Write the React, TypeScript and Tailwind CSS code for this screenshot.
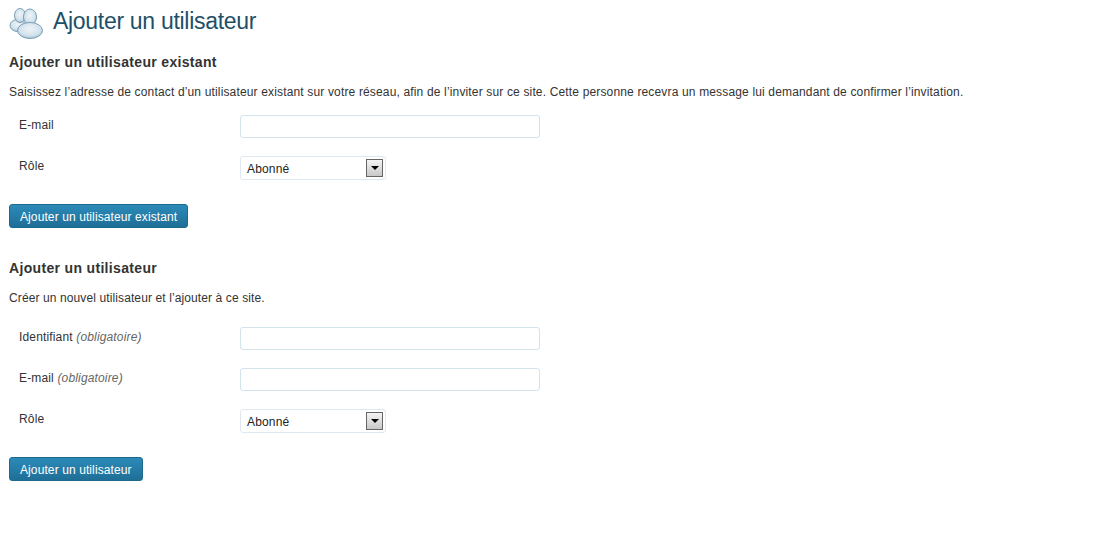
function UsersIcon() {
  return (
    <svg width="36" height="36" viewBox="0 0 36 36" className="shrink-0">
      <defs>
        <radialGradient id="usr" cx="0.5" cy="0.4" r="0.6">
          <stop offset="0" stopColor="#eef4f8" />
          <stop offset="0.7" stopColor="#d3e2ec" />
          <stop offset="1" stopColor="#a4c2d6" />
        </radialGradient>
      </defs>
      <ellipse cx="8.500" cy="21.500" rx="7.500" ry="6" fill="url(#usr)" stroke="#7ba0b8" />
      <ellipse cx="11" cy="11.500" rx="5.500" ry="7" fill="url(#usr)" stroke="#7ba0b8" />
      <ellipse cx="21" cy="13" rx="6.500" ry="8" fill="url(#usr)" stroke="#7ba0b8" />
      <ellipse cx="21" cy="26.500" rx="12.500" ry="8" fill="url(#usr)" stroke="#7ba0b8" />
    </svg>
  );
}

function SelectBox() {
  return (
    <div className="flex h-6 w-[146px] items-center justify-between rounded-[3px] border border-[#dfe8ef] bg-white pl-[6px] pr-[2px] text-xs text-[#222]">
      <span className="pt-[2px]">Abonné</span>
      <span className="flex h-[18px] w-[17px] items-center justify-center border border-[#666] bg-gradient-to-b from-[#f4f4f4] to-[#c8c8c8]">
        <span className="h-0 w-0 border-x-4 border-t-4 border-x-transparent border-t-black" />
      </span>
    </div>
  );
}

function Field({ label, hint }: { label: string; hint?: string }) {
  return (
    <div className="flex h-[41px] items-start">
      <label className="w-[231px] pl-[10px] pt-[5px]">
        {label} {hint && <em className="text-[#666]">{hint}</em>}
      </label>
      <input className="mt-[3px] h-[23px] w-[300px] rounded-[3px] border border-[#d3e3ec] bg-white" />
    </div>
  );
}

function RoleField() {
  return (
    <div className="flex items-start">
      <label className="w-[231px] pl-[10px] pt-[5px]">Rôle</label>
      <div className="mt-[3px]">
        <SelectBox />
      </div>
    </div>
  );
}

function SubmitButton({ children }: { children: string }) {
  return (
    <button className="flex h-6 items-center rounded-[3px] border border-[#1d6a8d] bg-gradient-to-b from-[#2c8ab8] to-[#1f6f97] px-[10px] pt-[1px] text-xs font-normal tracking-[0.1px] text-white">
      {children}
    </button>
  );
}

export default function App() {
  return (
    <div className="min-h-[540px] bg-white pl-[9px] font-['Liberation_Sans',Arial,sans-serif] text-xs tracking-[0.155px] text-[#333]">
      <header className="flex h-[43px] items-center gap-2">
        <UsersIcon />
        <h2 className="text-[23px] font-normal tracking-[-0.3px] text-[#1d5068]">
          Ajouter un utilisateur
        </h2>
      </header>

      <h3 className="mt-[11px] text-sm/4 font-bold tracking-[0.33px] text-[#333]">
        Ajouter un utilisateur existant
      </h3>
      <p className="mt-[14px]">
        Saisissez l’adresse de contact d’un utilisateur existant sur votre réseau, afin de l’inviter
        sur ce site. Cette personne recevra un message lui demandant de confirmer l’invitation.
      </p>
      <div className="mt-[12px]">
        <Field label="E-mail" />
        <RoleField />
      </div>
      <div className="mt-[24px]">
        <SubmitButton>Ajouter un utilisateur existant</SubmitButton>
      </div>

      <h3 className="mt-[32px] text-sm/4 font-bold tracking-[0.33px] text-[#333]">
        Ajouter un utilisateur
      </h3>
      <p className="mt-[14px] tracking-[0.11px]">
        Créer un nouvel utilisateur et l’ajouter à ce site.
      </p>
      <div className="mt-[18px]">
        <Field label="Identifiant" hint="(obligatoire)" />
        <Field label="E-mail" hint="(obligatoire)" />
        <RoleField />
      </div>
      <div className="mt-[24px]">
        <SubmitButton>Ajouter un utilisateur</SubmitButton>
      </div>
    </div>
  );
}
